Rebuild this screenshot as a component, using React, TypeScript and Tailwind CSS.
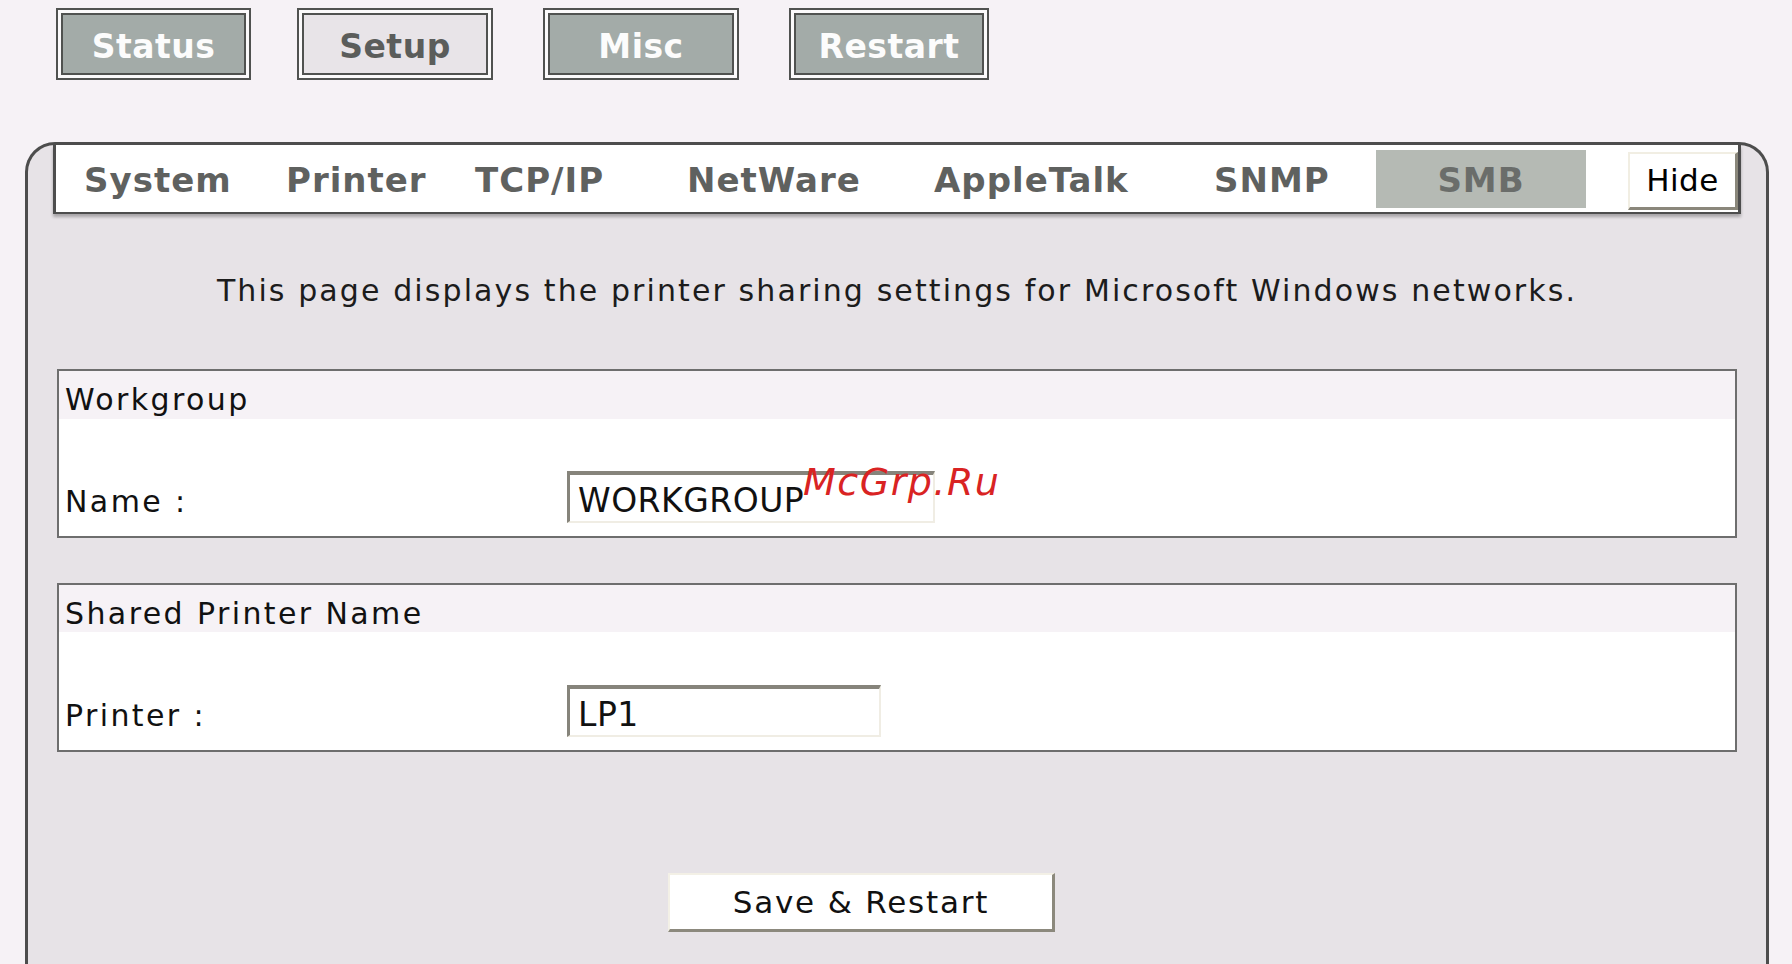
import React from 'react';

const font = { fontFamily: '"DejaVu Sans", Verdana, sans-serif' };

interface NavProps {
    label: string;
    active?: boolean;
    className: string;
}

const NavButton: React.FC<NavProps> = ({ label, active, className }) => (
    <div className={`border-2 border-[#505250] bg-[#fbfafb] p-[3px] ${className}`}>
        <div
            className={`border-2 border-[#505250] h-[62px] flex items-center justify-center pt-[6px] text-[33px] tracking-[0.5px] font-bold ${
                active ? 'bg-[#e8e4e8] text-[#5b5d5b]' : 'bg-[#a3aba8] text-[#fcfcfc]'
            }`}
        >
            {label}
        </div>
    </div>
);

const tabs = [
    { label: 'System', w: 'w-[202px]' },
    { label: 'Printer', w: 'w-[189px]' },
    { label: 'TCP/IP', w: 'w-[212px]' },
    { label: 'NetWare', w: 'w-[247px]' },
    { label: 'AppleTalk', w: 'w-[280px]' },
    { label: 'SNMP', w: 'w-[162px]' },
];

interface FieldProps {
    title: string;
    label: string;
    value: string;
    inputW: string;
    headerH: string;
    bodyPt: string;
    className?: string;
}

const FieldBox: React.FC<FieldProps> = ({ title, label, value, inputW, headerH, bodyPt, className = '' }) => (
    <div className={`mx-[29px] border-2 border-[#6e6e6e] bg-white ${className}`}>
        <div className={`${headerH} bg-[#f6f2f6] pl-[6px] pt-[11px] text-[30px] leading-[36px] tracking-[2.4px] text-[#111]`}>
            {title}
        </div>
        <div className={`flex items-baseline ${bodyPt} pb-[13px]`}>
            <div className="w-[508px] pl-[6px] text-[30px] leading-[36px] tracking-[2.4px] text-[#111]">{label}</div>
            <div
                className={`${inputW} h-[52px] bg-white border-t-[4px] border-l-[3px] border-t-[#86847b] border-l-[#86847b] border-b-2 border-r-2 border-b-[#f0ede4] border-r-[#f0ede4] pl-[8px] pt-[5px] text-[33px] leading-[41px] tracking-[0.5px] text-[#111]`}
            >
                {value}
            </div>
        </div>
    </div>
);

export default function App() {
    return (
        <div className="relative h-[964px] overflow-hidden bg-[#f6f2f6]" style={font}>
            {/* Top navigation */}
            <div className="flex pt-[8px] pl-[56px]">
                <NavButton label="Status" className="w-[195px]" />
                <NavButton label="Setup" active className="w-[196px] ml-[46px]" />
                <NavButton label="Misc" className="w-[196px] ml-[50px]" />
                <NavButton label="Restart" className="w-[200px] ml-[50px]" />
            </div>

            {/* Main panel */}
            <div className="mt-[62px] ml-[25px] mr-[23px] h-[840px] border-[3px] border-b-0 border-[#4d4d4d] rounded-t-[30px] bg-[#e7e3e7]">
                {/* Tab bar */}
                <div className="mx-[25px] h-[69px] flex border-x-[3px] border-b-2 border-[#4d4d4d] bg-white shadow-[0_3px_3px_rgba(0,0,0,0.28)] pl-[28px]">
                    {tabs.map(t => (
                        <div key={t.label} className={`${t.w} flex items-center pt-[4px] text-[34px] tracking-[1px] font-bold text-[#5f615f]`}>
                            {t.label}
                        </div>
                    ))}
                    <div className="w-[210px] h-[58px] mt-[5px] bg-[#b5bab4] flex items-center justify-center pt-[3px] text-[34px] tracking-[1px] font-bold text-[#6a6d6a]">
                        SMB
                    </div>
                    <div className="ml-auto mt-[7px] w-[110px] h-[58px] bg-white border-t-2 border-l-2 border-t-[#f1eee3] border-l-[#f1eee3] border-b-[3px] border-r-[3px] border-b-[#8a877b] border-r-[#8a877b] flex items-center justify-center text-[31px] tracking-[0.5px] text-black">
                        Hide
                    </div>
                </div>

                <p className="mt-[59px] text-center text-[30px] leading-[36px] tracking-[2.1px] text-[#1c1c1c]">
                    This page displays the printer sharing settings for Microsoft Windows networks.
                </p>

                <FieldBox
                    className="mt-[60px]"
                    title="Workgroup"
                    label="Name :"
                    value="WORKGROUP"
                    inputW="w-[368px]"
                    headerH="h-[48px]"
                    bodyPt="pt-[52px]"
                />
                <FieldBox
                    className="mt-[45px]"
                    title="Shared Printer Name"
                    label="Printer :"
                    value="LP1"
                    inputW="w-[314px]"
                    headerH="h-[47px]"
                    bodyPt="pt-[53px]"
                />

                <div className="mt-[121px] pl-[640px]">
                    <div className="w-[387px] h-[59px] bg-white border-t-2 border-l-2 border-t-[#f3f0e6] border-l-[#f3f0e6] border-b-[3px] border-r-[3px] border-b-[#8c897d] border-r-[#8c897d] flex items-center justify-center text-[31px] tracking-[1.8px] text-[#111]">
                        Save &amp; Restart
                    </div>
                </div>
            </div>

            {/* Watermark overlay */}
            <div className="absolute left-[803px] top-[463px] text-[38px] leading-[38px] italic tracking-[1.5px] text-[#d92323]">
                McGrp.Ru
            </div>
        </div>
    );
}
